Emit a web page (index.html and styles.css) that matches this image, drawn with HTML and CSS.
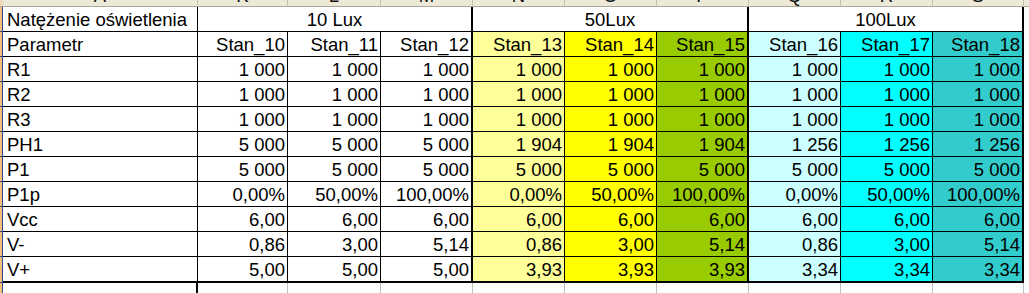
FILE: index.html
```html
<!DOCTYPE html>
<html lang="pl">
<head>
<meta charset="utf-8">
<title>Arkusz</title>
<link rel="stylesheet" href="styles.css">
</head>
<body>
<div class="sheet">
  <!-- column header strip -->
  <div class="corner"></div>
  <div class="ch"><span>A</span></div>
  <div class="ch"><span>K</span></div>
  <div class="ch"><span>L</span></div>
  <div class="ch"><span>M</span></div>
  <div class="ch"><span>N</span></div>
  <div class="ch"><span>O</span></div>
  <div class="ch"><span>P</span></div>
  <div class="ch"><span>Q</span></div>
  <div class="ch"><span>R</span></div>
  <div class="ch"><span>S</span></div>
  <div class="ch rest"></div>

  <!-- row 1 -->
  <div class="rh"></div>
  <div class="c l">Natężenie oświetlenia</div>
  <div class="c m span3 tk">10 Lux</div>
  <div class="c m span3 tk">50Lux</div>
  <div class="c m span3 tk">100Lux</div>
  <div class="c e"></div>

  <!-- row 2 -->
  <div class="rh"></div>
  <div class="c l">Parametr</div>
  <div class="c n">Stan_10</div><div class="c n">Stan_11</div><div class="c n tk">Stan_12</div>
  <div class="c n y1">Stan_13</div><div class="c n y2">Stan_14</div><div class="c n g tk">Stan_15</div>
  <div class="c n c1">Stan_16</div><div class="c n c2">Stan_17</div><div class="c n c3 tk">Stan_18</div>
  <div class="c e"></div>

  <div class="rh"></div>
  <div class="c l">R1</div>
  <div class="c n">1 000</div><div class="c n">1 000</div><div class="c n tk">1 000</div>
  <div class="c n y1">1 000</div><div class="c n y2">1 000</div><div class="c n g tk">1 000</div>
  <div class="c n c1">1 000</div><div class="c n c2">1 000</div><div class="c n c3 tk">1 000</div>
  <div class="c e"></div>

  <div class="rh"></div>
  <div class="c l">R2</div>
  <div class="c n">1 000</div><div class="c n">1 000</div><div class="c n tk">1 000</div>
  <div class="c n y1">1 000</div><div class="c n y2">1 000</div><div class="c n g tk">1 000</div>
  <div class="c n c1">1 000</div><div class="c n c2">1 000</div><div class="c n c3 tk">1 000</div>
  <div class="c e"></div>

  <div class="rh"></div>
  <div class="c l">R3</div>
  <div class="c n">1 000</div><div class="c n">1 000</div><div class="c n tk">1 000</div>
  <div class="c n y1">1 000</div><div class="c n y2">1 000</div><div class="c n g tk">1 000</div>
  <div class="c n c1">1 000</div><div class="c n c2">1 000</div><div class="c n c3 tk">1 000</div>
  <div class="c e"></div>

  <div class="rh"></div>
  <div class="c l">PH1</div>
  <div class="c n">5 000</div><div class="c n">5 000</div><div class="c n tk">5 000</div>
  <div class="c n y1">1 904</div><div class="c n y2">1 904</div><div class="c n g tk">1 904</div>
  <div class="c n c1">1 256</div><div class="c n c2">1 256</div><div class="c n c3 tk">1 256</div>
  <div class="c e"></div>

  <div class="rh"></div>
  <div class="c l">P1</div>
  <div class="c n">5 000</div><div class="c n">5 000</div><div class="c n tk">5 000</div>
  <div class="c n y1">5 000</div><div class="c n y2">5 000</div><div class="c n g tk">5 000</div>
  <div class="c n c1">5 000</div><div class="c n c2">5 000</div><div class="c n c3 tk">5 000</div>
  <div class="c e"></div>

  <div class="rh"></div>
  <div class="c l">P1p</div>
  <div class="c n">0,00%</div><div class="c n">50,00%</div><div class="c n tk">100,00%</div>
  <div class="c n y1">0,00%</div><div class="c n y2">50,00%</div><div class="c n g tk">100,00%</div>
  <div class="c n c1">0,00%</div><div class="c n c2">50,00%</div><div class="c n c3 tk">100,00%</div>
  <div class="c e"></div>

  <div class="rh"></div>
  <div class="c l">Vcc</div>
  <div class="c n">6,00</div><div class="c n">6,00</div><div class="c n tk">6,00</div>
  <div class="c n y1">6,00</div><div class="c n y2">6,00</div><div class="c n g tk">6,00</div>
  <div class="c n c1">6,00</div><div class="c n c2">6,00</div><div class="c n c3 tk">6,00</div>
  <div class="c e"></div>

  <div class="rh"></div>
  <div class="c l">V-</div>
  <div class="c n">0,86</div><div class="c n">3,00</div><div class="c n tk">5,14</div>
  <div class="c n y1">0,86</div><div class="c n y2">3,00</div><div class="c n g tk">5,14</div>
  <div class="c n c1">0,86</div><div class="c n c2">3,00</div><div class="c n c3 tk">5,14</div>
  <div class="c e"></div>

  <div class="rh"></div>
  <div class="c l bt">V+</div>
  <div class="c n bt">5,00</div><div class="c n bt">5,00</div><div class="c n tk bt">5,00</div>
  <div class="c n y1 bt">3,93</div><div class="c n y2 bt">3,93</div><div class="c n g tk bt">3,93</div>
  <div class="c n c1 bt">3,34</div><div class="c n c2 bt">3,34</div><div class="c n c3 tk bt">3,34</div>
  <div class="c e"></div>

  <!-- blank row -->
  <div class="rh"></div>
  <div class="b bA"></div>
  <div class="b"></div><div class="b"></div><div class="b"></div>
  <div class="b"></div><div class="b"></div><div class="b"></div>
  <div class="b"></div><div class="b"></div><div class="b"></div>
  <div class="b e"></div>
</div>
</body>
</html>
```

FILE: styles.css
```css
html, body {
  margin: 0;
  padding: 0;
  background: #ffffff;
  overflow: hidden;
}

.sheet {
  display: grid;
  grid-template-columns: 3px 195px 90px 93px 92px 92px 92px 92px 92px 92px 91px 1fr;
  grid-template-rows: 7px repeat(10, 25px) 26px 20px;
  width: 1029px;
  height: 293px;
  overflow: hidden;
  font-family: "Liberation Sans", Arial, sans-serif;
  font-size: 18.5px;
  color: #000;
}

.sheet > div {
  box-sizing: border-box;
  min-width: 0;
  overflow: hidden;
  white-space: nowrap;
}

/* column header strip: only the feet of the letters show */
.corner {
  background: #ecd9b8;
  border-bottom: 1px solid #aca899;
}
.ch {
  background: #ece9d8;
  border-bottom: 1px solid #aca899;
  border-right: 1px solid #c4c1b0;
  text-align: center;
  line-height: 20px;
}
.ch span {
  display: block;
  margin-top: -14px;
  color: #111;
}
.ch.rest {
  border-right: none;
}

/* row header strip (selected rows) */
.rh {
  background: #f6bd78;
  border-right: 1px solid #2b4a92;
  border-bottom: 1px solid #2b4a92;
}

/* cells */
.c {
  border-right: 1px solid #000;
  border-bottom: 1px solid #000;
  padding-top: 1px;
  line-height: 23px;
  background: #fff;
}
.l { padding-left: 4px; text-align: left; }
.n { padding-right: 2px; text-align: right; }
.m { text-align: center; }
.span3 { grid-column: span 3; }
.tk { border-right-width: 2px; }
.bt { border-bottom-width: 2px; }
.c.e { border: none; }

.y1 { background: #ffff99; }
.y2 { background: #ffff00; }
.g  { background: #99cc00; }
.c1 { background: #ccffff; }
.c2 { background: #00ffff; }
.c3 { background: #33cccc; }

/* blank row below the table */
.b {
  border-right: 1px solid #c0c0c0;
}
.b.bA {
  border-right: 2px solid #000;
}
.b.e { border: none; }
```
